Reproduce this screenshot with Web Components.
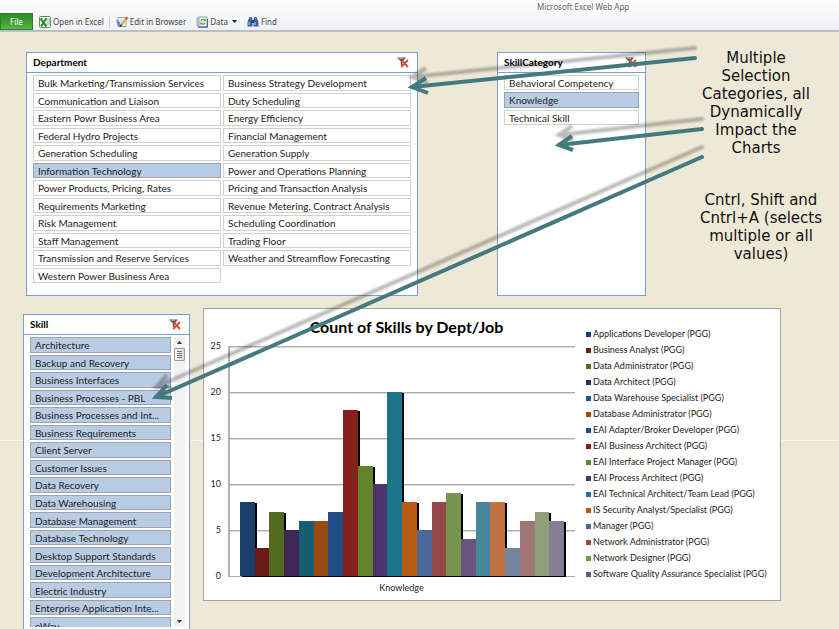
<!DOCTYPE html>
<html lang="en">
<head>
<meta charset="utf-8">
<title>Microsoft Excel Web App</title>
<style>
html, body { margin: 0; height: 100%; }
body { overflow: hidden; background: #eee9d7; color: #222; font-family: Lato, "Noto Sans", sans-serif; }
</style>
</head>
<body>
<workbook-page></workbook-page>
<script>
const define = (name, html, setup) => {
  const template = document.createElement('template');
  template.innerHTML = html;
  customElements.define(name, class extends HTMLElement {
    connectedCallback() {
      if (this.shadowRoot) return;
      const root = this.attachShadow({ mode: 'open' });
      root.append(template.content.cloneNode(true));
      if (setup) setup(this, root);
    }
  });
};

define('tool-button', `
<style>
:host { display: flex; }
button { display: flex; align-items: center; gap: 2px; margin: 0; padding: 0; border: 0; background: none; color: #444; font: 8px/12px "Noto Sans", sans-serif; white-space: nowrap; }
</style>
<button type="button"><slot name="icon"></slot><slot></slot><slot name="after"></slot></button>`);

define('app-header', `
<style>
:host { display: flex; flex-direction: column; height: 30px; border-bottom: 2px solid #bcbfc4; background: linear-gradient(#fdfdfd, #f0f1f3); flex: none; }
.title { height: 13px; padding-left: 64%; font: 8px/13px "Noto Sans", sans-serif; color: #666; }
nav { display: flex; flex: 1; align-items: stretch; }
.file { width: 33px; margin: 0 6px 0 0; padding: 0; border: 1px solid #2c7d2c; background: linear-gradient(#2f8a2c, #3f9f33 60%, #5cb848); color: #fff; font: 8px/12px "Noto Sans", sans-serif; }
.sep { width: 1px; margin: 3px 6px 2px 5px; background: #c9ccd0; }
tool-button + tool-button { margin-left: 10px; }
svg { display: block; width: 12px; height: 12px; }
.caret { width: 5px; height: 3px; margin-left: 2px; }
</style>
<div class="title">Microsoft Excel Web App</div>
<nav>
  <button class="file" type="button">File</button>
  <tool-button>
    <svg slot="icon" viewBox="0 0 12 12"><rect x=".5" y=".5" width="11" height="11" rx="1" fill="#fff" stroke="#4d9a4d"/><path d="M7 2h4v8H7z" fill="#dff0dc"/><path d="M8 4h3M8 6h3M8 8h3" stroke="#7cb87a" stroke-width=".7"/><path d="M1.500 2.500 7.500 10.500M7.500 2 2 10.500" stroke="#2c8a30" stroke-width="2.100"/></svg>
    Open in Excel
  </tool-button>
  <span class="sep"></span>
  <tool-button>
    <svg slot="icon" viewBox="0 0 12 12"><path d="M2 1.500h8v9H2z" fill="#f8fafd" stroke="#8b9bb8"/><path d="M3.500 4h5M3.500 6h4" stroke="#a8b8d0" stroke-width=".8"/><path d="M0 4l3 1 3 6-4-1z" fill="#6b87b5"/><path d="M5 9.500 10.500 2.500" stroke="#e4ae3e" stroke-width="2.200"/><path d="M10 3.200 11.200 1.200" stroke="#b8423a" stroke-width="2"/><path d="M4 10.800 5.800 8.500" stroke="#333" stroke-width="1.200"/></svg>
    Edit in Browser
  </tool-button>
  <tool-button>
    <svg slot="icon" viewBox="0 0 12 12"><path d="M1 2h3v8H1z" fill="#d5deec" stroke="#8495b3" stroke-width=".8"/><rect x="3" y="1" width="8" height="9.500" fill="#eef4fa" stroke="#8495b3" stroke-width=".9"/><path d="M2 11.300h9.500V3" fill="none" stroke="#4a6396"/><path d="M5 5a2.200 2.200 0 0 1 4-.6M9 6.500a2.200 2.200 0 0 1-4 .6" fill="none" stroke="#6aa72c" stroke-width="1.300"/><path d="M9.800 2.500v2.700H7.300zM4.300 9V6.300h2.500z" fill="#6aa72c"/></svg>
    Data
    <svg class="caret" slot="after" viewBox="0 0 5 3"><path d="M0 0h5L2.500 3z" fill="#222"/></svg>
  </tool-button>
  <tool-button>
    <svg slot="icon" viewBox="0 0 12 12"><path d="M2.500 1h2.200l.8 2.500v7H.5V6zM9.500 1H7.300l-.8 2.500v7h5V6z" fill="#3e619c"/><path d="M4.500 4h3v3h-3z" fill="#2c4878"/><path d="M2 6v3M8 6v3" stroke="#a9c0e4" stroke-width="1.200"/><path d="M3 2h1M8 2h1" stroke="#8faad6"/></svg>
    Find
  </tool-button>
</nav>`);

define('slicer-item', `
<style>
:host { display: flex; min-width: 0; }
button { flex: 1; min-width: 0; margin: 0; padding: 1px 3px 0 4px; box-sizing: border-box; border: 1px solid #d0d0d0; background: #fff; color: #222; font: 10px/12px Lato, "Noto Sans", sans-serif; text-align: left; white-space: nowrap; overflow: hidden; text-overflow: ellipsis; }
button[aria-pressed="true"] { border-color: #9aa3b1; background: #b8cce4; }
</style>
<button type="button"><slot></slot></button>`, (host, root) => {
  const button = root.querySelector('button');
  button.setAttribute('aria-pressed', host.hasAttribute('selected'));
  button.addEventListener('click', () => {
    button.setAttribute('aria-pressed', button.getAttribute('aria-pressed') !== 'true');
  });
});

define('slicer-panel', `
<style>
:host { display: flex; flex-direction: column; box-sizing: border-box; min-width: 0; border: 1px solid #7ba0cd; background: #fff; }
header { display: flex; flex: none; align-items: center; justify-content: space-between; height: 19px; padding: 0 8px 0 6px; border-bottom: 1px solid #7ba0cd; }
h2 { margin: 0; font: bold 10px/19px Lato, "Noto Sans", sans-serif; color: #000; }
.clear { margin: 0; padding: 0; border: 0; background: none; }
.clear svg { display: block; width: 12px; height: 11px; }
.body { display: flex; flex: 1; min-height: 0; gap: 3px; padding: 2px 6px 0 6px; }
.view { flex: 1; min-width: 0; overflow: hidden; }
.items { display: grid; grid-template-columns: repeat(var(--columns, 1), minmax(0, 1fr)); grid-auto-rows: 1fr; gap: 2px; min-height: var(--list-height, 0); }
.bar { display: none; }
:host([scrolling]) .body { padding: 2px 4px 2px 6px; }
:host([scrolling]) .bar { display: flex; flex-direction: column; width: 11px; background: #f1f1f1; }
.bar button { height: 11px; margin: 0; padding: 0; border: 0; background: none; color: #444; display: grid; place-items: center; }
.bar svg { display: block; width: 5px; height: 3px; }
.bar .thumb { box-sizing: border-box; height: 13px; border: 1px solid #999; border-radius: 1px; background: linear-gradient(90deg, #fafafa, #d8d8d8); display: grid; place-items: center; }
.bar .thumb svg { width: 5px; height: 7px; }
.track { flex: 1; }
</style>
<header><h2></h2><button class="clear" type="button" aria-label="Clear filter">
<svg viewBox="0 0 12 11"><path d="M0 .5h9L5.500 4.500V9L3.800 7.500v-3z" fill="#555"/><path d="M2 1.200h4" stroke="#ccc"/><path d="M5 3.500l5.500 6M10.500 3.500 4.800 9.500" stroke="#e0492e" stroke-width="1.900" stroke-linecap="round"/></svg></button></header>
<div class="body">
  <div class="view"><div class="items"><slot></slot></div></div>
  <div class="bar">
    <button type="button" aria-label="Scroll up"><svg viewBox="0 0 5 3"><path d="M0 3h5L2.500 0z" fill="#333"/></svg></button>
    <div class="thumb"><svg viewBox="0 0 5 7"><path d="M0 .5h5M0 2.500h5M0 4.500h5M0 6.500h5" stroke="#666" stroke-width=".9"/></svg></div>
    <div class="track"></div>
    <button type="button" aria-label="Scroll down"><svg viewBox="0 0 5 3"><path d="M0 0h5L2.500 3z" fill="#333"/></svg></button>
  </div>
</div>`, (host, root) => {
  root.querySelector('h2').textContent = host.getAttribute('heading');
});

define('skills-chart', `
<style>
:host { display: grid; box-sizing: border-box; min-width: 0; grid-template-columns: 24px minmax(0, 1fr) 205px; grid-template-rows: 37px 231px 1fr; border: 1px solid #a3a3a0; background: #fff; font-size: 9px; line-height: 16px; color: #222; }
.scale { grid-row: 1 / 4; display: flex; flex-direction: column; padding: 14px 7px 0 0; text-align: right; }
.scale span { height: 46px; line-height: 46px; }
h2 { grid-column: 2; margin: 0; padding-left: 10px; font-size: 16px; line-height: 36px; text-align: center; color: #000; white-space: nowrap; }
.plot { grid-column: 2; grid-row: 2; display: flex; align-items: flex-end; box-sizing: border-box; padding: 0 11px 1px 10px; border-left: 2px solid #b0b0b0; background: repeating-linear-gradient(#adadad 0 1px, #dadada 1px 2px, transparent 2px 46px); overflow: hidden; }
.plot i { flex: 1; box-shadow: 2px 1px #000; }
.label { grid-column: 2; grid-row: 3; padding-top: 3px; text-align: center; }
ul { grid-column: 3; grid-row: 1 / 4; margin: 0; padding: 17px 0 0 11px; list-style: none; }
li { display: flex; align-items: center; gap: 2px; white-space: nowrap; }
li i { width: 5px; height: 5px; }
</style>
<div class="scale"><span>25</span><span>20</span><span>15</span><span>10</span><span>5</span><span>0</span></div>
<h2>Count of Skills by Dept/Job</h2>
<div class="plot"></div>
<div class="label">Knowledge</div>
<ul></ul>`, (host, root) => {
  const colors = ['#1a3f6b', '#6b1a17', '#526b20', '#3f2858', '#175e73', '#984a10', '#204c86', '#85211d', '#64832a', '#4e326d', '#1c738c', '#b75a14', '#4a6797', '#95484a', '#78954e', '#68547f', '#47879b', '#c27140', '#76869f', '#9f7575', '#8f9f79', '#867c95'];
  const values = [8, 3, 7, 5, 6, 6, 7, 18, 12, 10, 20, 8, 5, 8, 9, 4, 8, 8, 3, 6, 7, 6];
  const names = ['Applications Developer', 'Business Analyst', 'Data Administrator', 'Data Architect', 'Data Warehouse Specialist', 'Database Administrator', 'EAI Adapter/Broker Developer', 'EAI Business Architect', 'EAI Interface Project Manager', 'EAI Process Architect', 'EAI Technical Architect/Team Lead', 'IS Security Analyst/Specialist', 'Manager', 'Network Administrator', 'Network Designer', 'Software Quality Assurance Specialist'];
  root.querySelector('.plot').innerHTML = values.map((v, i) => `<i style="height:${v * 4}%;background:${colors[i]}"></i>`).join('');
  root.querySelector('ul').innerHTML = names.map((n, i) => `<li><i style="background:${colors[i]}"></i>${n} (PGG)</li>`).join('');
});

define('side-notes', `
<style>
:host { display: block; min-width: 0; font: 15px/18px "DejaVu Sans", sans-serif; color: #111; text-align: center; }
p { margin: 0; white-space: nowrap; }
p:first-of-type { padding-right: 10px; }
p + p { margin-top: 34px; }
</style>
<p>Multiple<br>Selection<br>Categories, all<br>Dynamically<br>Impact the<br>Charts</p>
<p>Cntrl, Shift and<br>Cntrl+A (selects<br>multiple or all<br>values)</p>`);

define('pointer-arrows', `
<style>
:host { position: absolute; top: 0; left: 0; pointer-events: none; }
svg { display: block; }
</style>
<svg width="839" height="629" viewBox="0 0 839 629" fill="none" stroke-width="4" stroke-linecap="round" aria-hidden="true">
  <defs>
    <filter id="soft" x="-5%" y="-5%" width="110%" height="110%"><feGaussianBlur stdDeviation="1.300"/></filter>
    <g id="arrows">
      <path d="M695 58 412 87M702 129 559 145M702 157 156 397"/>
      <path stroke-linecap="butt" d="M426 78 412 87 428 93M572 136 559 145 573 150M167 385 156 397 172 398"/>
    </g>
  </defs>
  <use href="#arrows" y="-10" stroke="#000" opacity=".27" filter="url(#soft)"/>
  <use href="#arrows" stroke="#44797f"/>
</svg>`);

define('workbook-page', `
<style>
:host { display: flex; flex-direction: column; position: relative; height: 100%; overflow: hidden; }
main { display: flex; flex-direction: column; flex: 1; min-height: 0; gap: 12px; padding-top: 20px; background: linear-gradient(#f8f6ee, #f8f6ee) 0 408px / 100% 1px no-repeat; }
.top { display: grid; grid-template-columns: minmax(0, 392fr) 79px minmax(0, 149fr) 44px minmax(0, 142fr); padding: 0 7px 0 26px; }
.top slicer-panel { min-height: 244px; }
.department { --columns: 2; --list-height: 208px; }
.category { grid-column: 3; --list-height: 50px; }
side-notes { grid-column: 5; margin-top: -3px; height: 0; }
.bottom { display: grid; flex: 1; min-height: 0; grid-template-columns: minmax(0, 167fr) minmax(0, 578fr); column-gap: 13px; padding: 0 58px 0 23px; }
.skill { --list-height: 296px; margin-top: 6px; border-bottom: 0; min-height: 0; }
skills-chart { align-self: start; min-height: 293px; }
</style>
<app-header></app-header>
<main>
  <section class="top">
    <slicer-panel class="department" heading="Department"></slicer-panel>
    <slicer-panel class="category" heading="SkillCategory"></slicer-panel>
    <side-notes></side-notes>
  </section>
  <section class="bottom">
    <slicer-panel class="skill" heading="Skill" scrolling></slicer-panel>
    <skills-chart></skills-chart>
  </section>
</main>
<pointer-arrows></pointer-arrows>`, (host, root) => {
  const fill = (selector, names, isSelected) => {
    const panel = root.querySelector(selector);
    for (const name of names) {
      const item = document.createElement('slicer-item');
      item.textContent = name;
      if (isSelected(name)) item.setAttribute('selected', '');
      panel.append(item);
    }
  };
  fill('.department', ['Bulk Marketing/Transmission Services', 'Business Strategy Development', 'Communication and Liaison', 'Duty Scheduling', 'Eastern Powr Business Area', 'Energy Efficiency', 'Federal Hydro Projects', 'Financial Management', 'Generation Scheduling', 'Generation Supply', 'Information Technology', 'Power and Operations Planning', 'Power Products, Pricing, Rates', 'Pricing and Transaction Analysis', 'Requirements Marketing', 'Revenue Metering, Contract Analysis', 'Risk Management', 'Scheduling Coordination', 'Staff Management', 'Trading Floor', 'Transmission and Reserve Services', 'Weather and Streamflow Forecasting', 'Western Power Business Area'], n => n === 'Information Technology');
  fill('.category', ['Behavioral Competency', 'Knowledge', 'Technical Skill'], n => n === 'Knowledge');
  fill('.skill', ['Architecture', 'Backup and Recovery', 'Business Interfaces', 'Business Processes - PBL', 'Business Processes and Int...', 'Business Requirements', 'Client Server', 'Customer Issues', 'Data Recovery', 'Data Warehousing', 'Database Management', 'Database Technology', 'Desktop Support Standards', 'Development Architecture', 'Electric Industry', 'Enterprise Application Inte...', 'eWay'], () => true);
});
</script>
</body>
</html>
